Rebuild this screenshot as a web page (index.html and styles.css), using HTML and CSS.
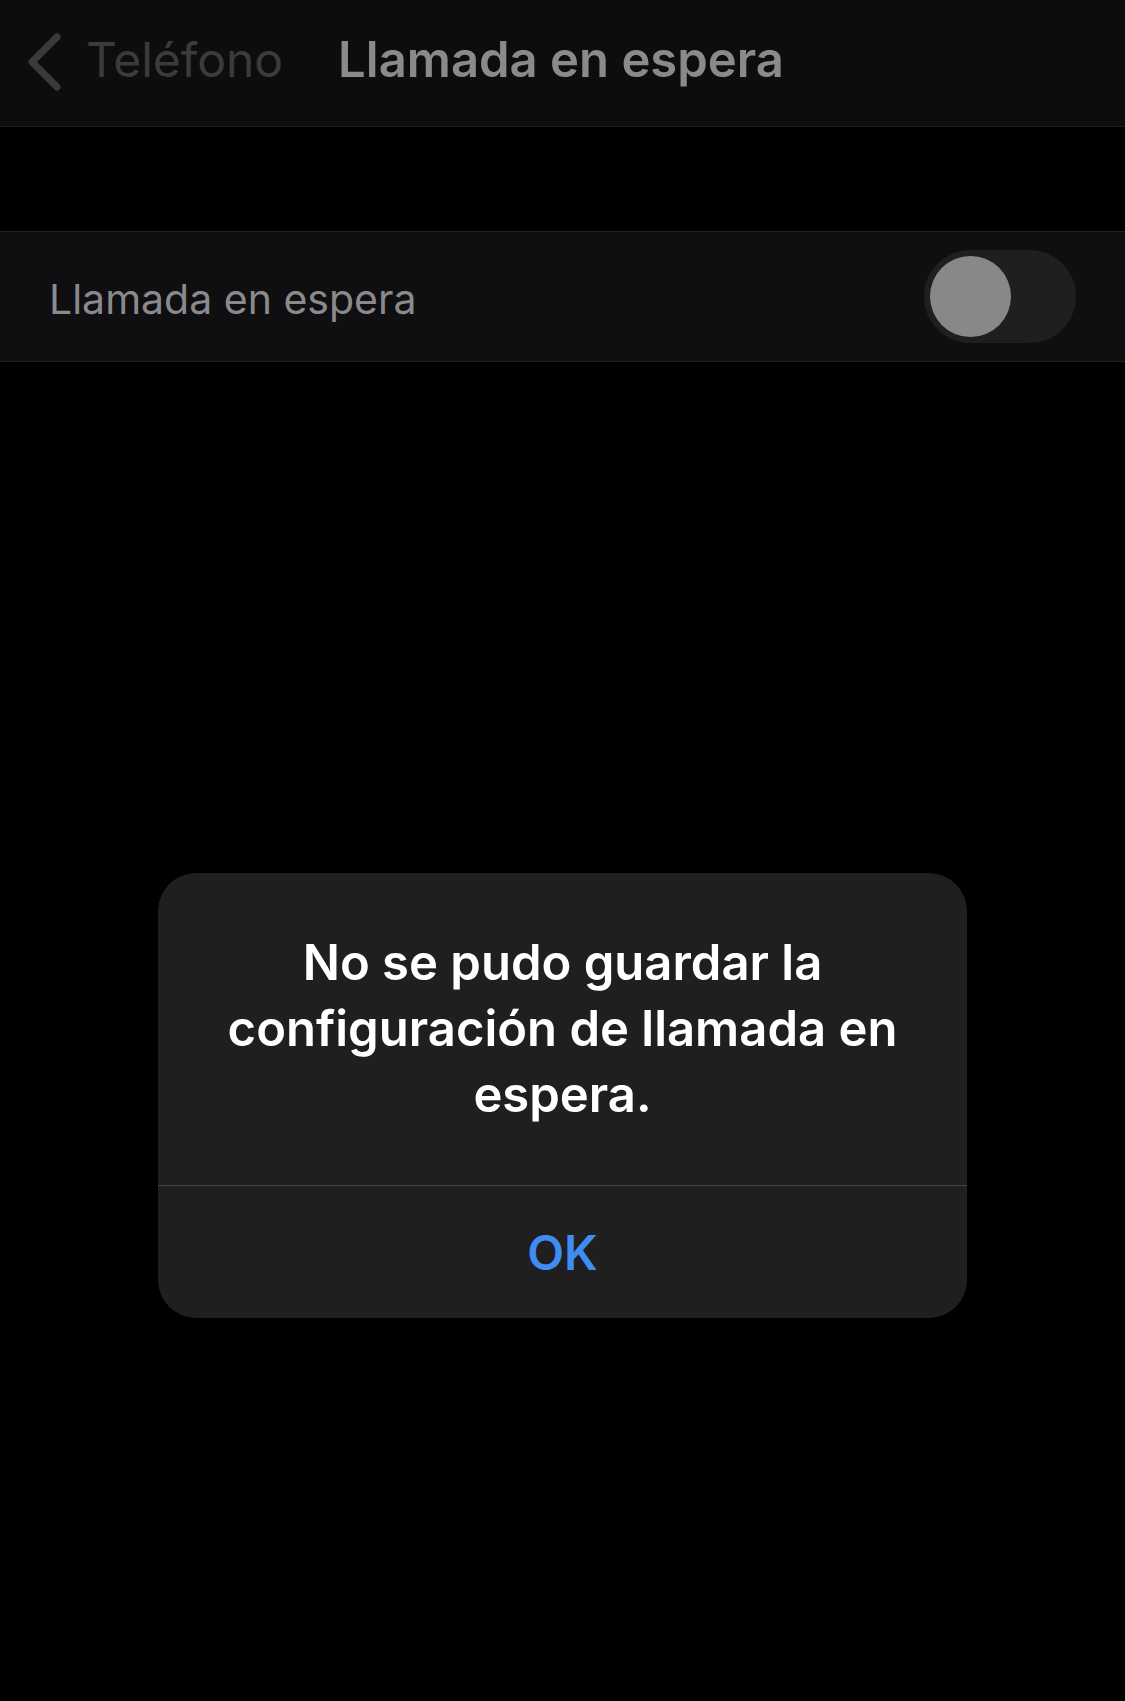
FILE: index.html
```html
<!DOCTYPE html>
<html lang="es">
 <head>
  <meta charset="UTF-8">
  <title>Llamada en espera</title>
  <meta name="viewport" content="width=device-width, initial-scale=1.0">
  <link rel="stylesheet" href="styles.css">
 </head>
 <body>
  <div class="screen">
   <header class="navbar">
    <svg class="back-icon" width="36" height="58" viewBox="0 0 36 58">
     <path d="M31 4 L6 29 L31 54" fill="none" stroke="#3a3a3a" stroke-width="7" stroke-linecap="round" stroke-linejoin="round"/>
    </svg>
    <span class="back-label">Teléfono</span>
    <span class="nav-title">Llamada en espera</span>
   </header>

   <div class="group">
    <div class="row">
     <span class="row-label">Llamada en espera</span>
     <div class="toggle"><div class="knob"></div></div>
    </div>
   </div>

   <div class="overlay">
    <div class="alert">
     <p class="alert-message">No se pudo guardar la configuración de llamada en espera.</p>
     <button class="alert-button">OK</button>
    </div>
   </div>
  </div>
 </body>
</html>
```

FILE: styles.css
```css
body {
  margin: 0;
  background: #000;
  font-family: Inter, "Liberation Sans", sans-serif;
}
.screen {
  position: relative;
  width: 1125px;
  height: 1701px;
  overflow: hidden;
}
.navbar {
  height: 126px;
  background: #0d0d0d;
  border-bottom: 1px solid #1c1c1c;
  display: flex;
  align-items: center;
  padding: 0 0 8px 26px;
  box-sizing: border-box;
  height: 127px;
}
.back-icon {
  flex-shrink: 0;
  margin-top: 6px;
}
.back-label {
  margin-left: 24px;
  font-size: 48px;
  color: #3b3b3b;
}
.nav-title {
  margin-left: 55px;
  font-size: 49px;
  font-weight: 600;
  color: #8a8a8a;
}
.group {
  margin-top: 104px;
  background: #0f0f11;
  border-top: 1px solid #222224;
  border-bottom: 1px solid #222224;
}
.row {
  height: 129px;
  display: flex;
  align-items: center;
  justify-content: space-between;
  padding: 0 49px 0 49px;
}
.row-label {
  font-size: 41px;
  color: #8a8a8c;
  margin-top: 4px;
}
.toggle {
  width: 152px;
  height: 93px;
  border-radius: 47px;
  background: #1f1f21;
  display: flex;
  align-items: center;
  padding-left: 6px;
  box-sizing: border-box;
}
.knob {
  width: 81px;
  height: 81px;
  border-radius: 50%;
  background: #888888;
}
.overlay {
  position: absolute;
  inset: 0;
  display: flex;
  flex-direction: column;
  align-items: center;
  padding-top: 873px;
}
.alert {
  width: 809px;
  background: #1f1f1f;
  border-radius: 38px;
  overflow: hidden;
}
.alert-message {
  margin: 0;
  padding: 57px 50px 57px;
  font-size: 49px;
  line-height: 66px;
  font-weight: 600;
  color: #fff;
  text-align: center;
}
.alert-button {
  display: block;
  width: 100%;
  height: 133px;
  border: none;
  border-top: 1px solid #444446;
  background: transparent;
  font-family: inherit;
  font-size: 48px;
  font-weight: 600;
  color: #3f8cf3;
}
```
